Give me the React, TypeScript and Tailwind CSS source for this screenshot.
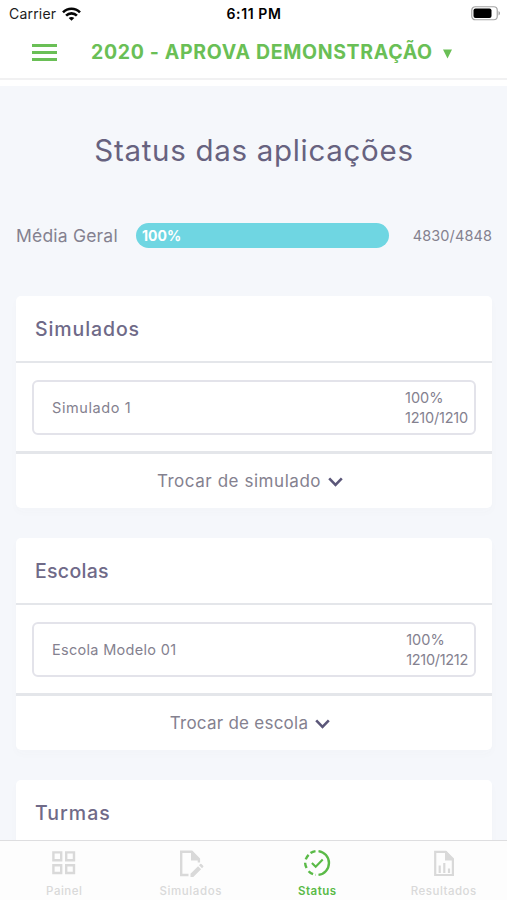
import { ReactNode } from "react";

type Section = {
  title: string;
  item?: string;
  total?: string;
  action?: string;
  titleClass: string;
  itemClass?: string;
  totalClass?: string;
  actionClass?: string;
};

const sections: Section[] = [
  {
    title: "Simulados",
    item: "Simulado 1",
    total: "1210/1210",
    action: "Trocar de simulado",
    titleClass: "tracking-[0.9px]",
    itemClass: "tracking-[0.6px]",
    totalClass: "tracking-[-0.2px]",
    actionClass: "tracking-[0.55px]",
  },
  {
    title: "Escolas",
    item: "Escola Modelo 01",
    total: "1210/1212",
    action: "Trocar de escola",
    titleClass: "tracking-[0.3px]",
    itemClass: "tracking-[0.3px]",
    totalClass: "tracking-[-0.3px]",
    actionClass: "tracking-[0.25px]",
  },
  { title: "Turmas", titleClass: "tracking-[1px]" },
];

function StatusBar() {
  return (
    <div className="grid h-[27px] grid-cols-3 items-center pr-[6px] pl-[9px] text-[14px] leading-none text-[#1c1c1c]">
      <div className="flex items-center gap-[6px]">
        <span className="tracking-[0.2px]">Carrier</span>
        <svg width="19" height="14" viewBox="0 0 19 14" fill="none" stroke="#050505" strokeWidth="2.6">
          <path d="M1 5.4C5.8 .6 13.2 .6 18 5.4" />
          <path d="M4.1 8.6C7.1 5.6 11.9 5.6 14.9 8.6" />
          <path d="M9.5 13.8 6.7 11C8.2 9.5 10.8 9.5 12.3 11Z" fill="#050505" stroke="none" />
        </svg>
      </div>
      <span className="pr-[2px] text-center font-semibold tracking-[0.6px] text-black">6:11 PM</span>
      <svg className="justify-self-end" width="30" height="15" viewBox="0 0 30 15">
        <rect x=".75" y=".75" width="25.5" height="13" rx="3.5" fill="none" stroke="#a5a5a5" strokeWidth="1.2" />
        <rect x="2.5" y="2.5" width="18" height="9.5" rx="2" fill="#000" />
        <path d="M27.5 5v4.5c2-.8 2-3.7 0-4.5Z" fill="#a5a5a5" />
      </svg>
    </div>
  );
}

function Header() {
  return (
    <header className="border-b-2 border-[#f1f1f2] bg-white">
      <StatusBar />
      <div className="flex h-[51px] items-center pl-8">
        <button aria-label="Menu" className="flex w-[25px] flex-col gap-[4px]">
          <span className="h-[3px] bg-[#6abf56]" />
          <span className="h-[3px] bg-[#6abf56]" />
          <span className="h-[3px] bg-[#6abf56]" />
        </button>
        <button className="ml-[34px] flex items-center text-[19.5px] font-bold text-[#6abf56]">
          <span className="tracking-[0.66px]">2020 - APROVA DEMONSTRAÇÃO</span>
          <svg className="mt-[2px] ml-[10px]" width="9" height="10" viewBox="0 0 10 10" fill="currentColor">
            <path d="M0 0h10L5 10Z" />
          </svg>
        </button>
      </div>
    </header>
  );
}

function Card({ section }: { section: Section }) {
  return (
    <section className="overflow-hidden rounded-[5px] bg-white shadow-[0_4px_10px_rgba(80,80,120,0.02)]">
      <h2 className="flex h-[65px] items-center pt-[2px] pl-[19px] text-[19.5px] font-medium text-[#6f6a88]">
        <span className={section.titleClass}>{section.title}</span>
      </h2>
      <div className="border-t-2 border-b-[3px] border-[#e4e6ea] px-4 pt-[17px] pb-4">
        <div className="flex h-[55px] items-center justify-between rounded-[6px] border-2 border-[#e3e3ea] pr-[6px] pl-[18px] text-[14.5px] text-[#84818f]">
          <span className={section.itemClass}>{section.item}</span>
          <div className="leading-5">
            <div>{section.item && "100%"}</div>
            <div className={section.totalClass}>{section.total}</div>
          </div>
        </div>
      </div>
      <button className="flex h-[54px] w-full items-center justify-center gap-[7px] pt-px pr-[8px] text-[17px] text-[#84818f]">
        <span className={section.actionClass}>{section.action}</span>
        <svg width="15" height="10" viewBox="0 0 15 10" fill="none" stroke="#5b5779" strokeWidth="2.6">
          <path d="M1.2 1.3 7.5 7.8 13.8 1.3" />
        </svg>
      </button>
    </section>
  );
}

function Tab({ label, labelClass, active, children }: { label: string; labelClass: string; active?: boolean; children: ReactNode }) {
  return (
    <button className={`flex flex-1 flex-col items-center pt-[7px] ${active ? "text-[#5aba47]" : "text-[#d9d9d9]"}`}>
      <svg width="30" height="30" viewBox="0 0 30 30" fill="none" stroke="currentColor" strokeWidth="2.4">
        {children}
      </svg>
      <span className={`mt-[4px] text-[11.5px] leading-[18px] ${active ? "font-semibold" : "font-medium"} ${labelClass}`}>{label}</span>
    </button>
  );
}

function TabBar() {
  return (
    <nav className="flex h-[60px] shrink-0 border-t-[1.5px] border-[#dedee0] bg-[#fdfdfd] pl-px">
      <Tab label="Painel" labelClass="tracking-[0.5px]">
        <path d="M4.4 4.4h7.8v7.8H4.4ZM17.2 4.4H25v7.8h-7.8ZM4.4 17.2h7.8V25H4.4ZM17.2 17.2H25V25h-7.8Z" />
      </Tab>
      <Tab label="Simulados" labelClass="tracking-[0.6px]">
        <path d="M12.5 27H5.2V3.8h10.5l7.2 7.2v3.5" />
        <path d="M15 3v9.5h9L16.5 3Z" fill="currentColor" stroke="none" />
        <path d="M14.5 29v-3.2l7.6-7.6 3 3L17.3 29ZM23 17.3l1.2-1.2q.7-.5 1.3 0l1.7 1.7q.6.7 0 1.3l-1.2 1.2Z" fill="currentColor" stroke="none" />
      </Tab>
      <Tab label="Status" active labelClass="tracking-[0.5px]">
        <path d="M16.5 3.1a12 12 0 0 1 0 23.8" />
        <path d="M13.5 3.1a12 12 0 0 0-5 2M6.6 6.8a12 12 0 0 0-3 5M3.1 14.8a12 12 0 0 0 1.7 5.6M6.6 23.2a12 12 0 0 0 6.9 3.7" strokeDasharray="5.4 2.2" />
        <path d="m9.9 15 3.8 3.8 7-7.2" strokeWidth="2.1" />
      </Tab>
      <Tab label="Resultados" labelClass="tracking-[0.5px]">
        <path d="M6.2 3.8h10.5l7.2 7.2v16H6.2ZM10.7 17.5V25M15.3 15v10M20 20.5V25" strokeWidth="2.2" />
        <path d="M16 3v9.5h9L17.5 3Z" fill="currentColor" stroke="none" />
      </Tab>
    </nav>
  );
}

export default function App() {
  return (
    <div className="flex h-[900px] w-[507px] flex-col overflow-hidden bg-white font-['Inter',sans-serif]">
      <Header />
      <main className="mt-[6px] min-h-0 flex-1 overflow-hidden bg-[#f5f7fb] pr-[15px] pl-4">
        <h1 className="mt-[44px] text-center text-[29.5px] leading-10 text-[#67627f]">
          <span className="tracking-[0.7px]">Status das aplicações</span>
        </h1>
        <div className="mt-[53px] flex h-[25px] items-center text-[#84818f]">
          <span className="w-[120px] shrink-0 pt-px text-[17.5px] tracking-[0.2px]">Média Geral</span>
          <div className="flex h-[25px] w-[253px] items-center rounded-full bg-[#6fd6e2] pl-[6px] text-[14px] font-bold text-white">
            100%
          </div>
          <span className="ml-auto text-[14.5px] tracking-[0.1px]">4830/4848</span>
        </div>
        <div className="mt-[48px] flex flex-col gap-[30px]">
          {sections.map((section) => (
            <Card key={section.title} section={section} />
          ))}
        </div>
      </main>
      <TabBar />
    </div>
  );
}
